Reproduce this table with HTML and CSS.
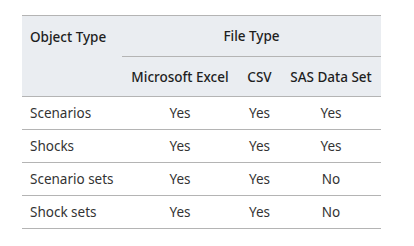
FILE: index.html
```html
<!DOCTYPE html>
<html>
<head>
<meta charset="utf-8">
<link rel="stylesheet" href="styles.css">
</head>
<body>
<table class="tbl">
  <colgroup>
    <col class="c1"><col class="c2"><col class="c3"><col class="c4">
  </colgroup>
  <thead>
    <tr>
      <th rowspan="2" class="left">Object Type</th>
      <th colspan="3" class="group">File Type</th>
    </tr>
    <tr class="sub">
      <th>Microsoft Excel</th>
      <th>CSV</th>
      <th>SAS Data Set</th>
    </tr>
  </thead>
  <tbody>
    <tr><td class="left">Scenarios</td><td>Yes</td><td>Yes</td><td>Yes</td></tr>
    <tr><td class="left">Shocks</td><td>Yes</td><td>Yes</td><td>Yes</td></tr>
    <tr><td class="left">Scenario sets</td><td>Yes</td><td>Yes</td><td>No</td></tr>
    <tr><td class="left">Shock sets</td><td>Yes</td><td>Yes</td><td>No</td></tr>
  </tbody>
</table>
</body>
</html>
```
FILE: styles.css
```css
html, body {
  margin: 0;
  padding: 0;
  background: #fff;
}
body {
  padding: 15px 0 0 22px;
  font-family: "Noto Sans", "Open Sans", sans-serif;
  font-size: 13.5px;
  color: #333;
}
.tbl {
  border-collapse: collapse;
  table-layout: fixed;
  width: 359px;
}
.c1 { width: 100px; }
.c2 { width: 116px; }
.c3 { width: 43px; }
.c4 { width: 100px; }
.tbl thead {
  background: #eaedf1;
}
.tbl thead tr:first-child th {
  border-top: 1px solid #b4b4b4;
  height: 40px;
}
.tbl th {
  font-weight: 500;
  color: #1e1e1e;
  padding: 0 3px;
  text-align: center;
  white-space: nowrap;
}
.tbl th.left {
  text-align: left;
  vertical-align: top;
  padding: 12px 0 0 8px;
  border-bottom: 1px solid #b4b4b4;
}
.tbl th.group {
  border-bottom: 1px solid #b4b4b4;
}
.tbl .sub th {
  height: 39px;
  border-bottom: 1px solid #b4b4b4;
}
.tbl td {
  height: 32px;
  padding: 0 3px;
  text-align: center;
  border-bottom: 1px solid #b4b4b4;
  white-space: nowrap;
}
.tbl td.left {
  text-align: left;
  padding-left: 8px;
}
```
